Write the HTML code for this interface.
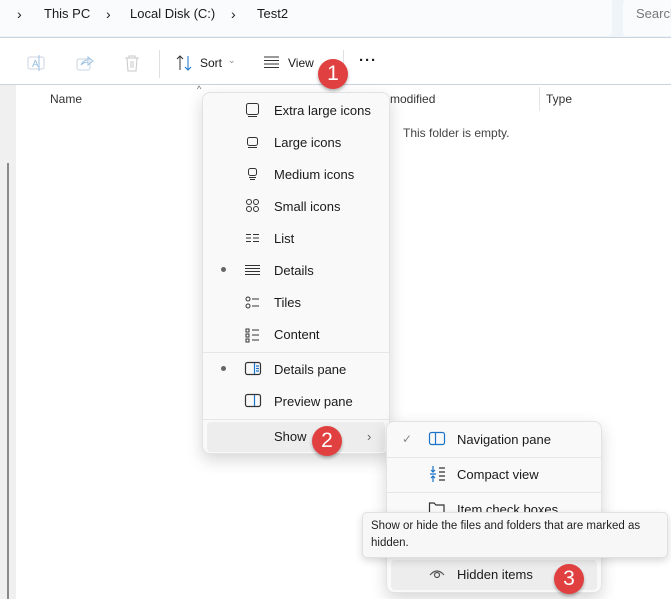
<!DOCTYPE html>
<html><head><meta charset="utf-8"><style>
*{margin:0;padding:0;box-sizing:border-box}
body{width:671px;height:599px;overflow:hidden;background:#fff;font-family:"Segoe UI","Liberation Sans",sans-serif;font-size:13px;color:#1a1a1a;position:relative}
.a{position:absolute;white-space:nowrap}
.menu{position:absolute;background:#f9f9f9;border:1px solid #e3e3e3;border-radius:8px;box-shadow:0 6px 16px rgba(0,0,0,.16)}
.it{position:absolute;left:0;right:0;height:30px}
.it span{position:absolute;top:7px;font-size:13px}
.sep{position:absolute;left:0;right:0;height:1px;background:#e6e6e6}
.badge{position:absolute;width:30px;height:30px;border-radius:50%;background:#e0403f;color:#fff;font-size:21px;text-align:center;line-height:30px;box-shadow:0 2px 3px rgba(0,0,0,.3)}
svg{position:absolute}
</style></head><body>
<div class="a" style="left:0;top:0;width:671px;height:38px;background:#eff4f9;border-bottom:1px solid #c9d3dd"></div>
<div class="a" style="left:0;top:0;width:612px;height:36px;background:#f9fbfd;border-radius:0 0 4px 0"></div>
<div class="a" style="left:623px;top:0;width:60px;height:36px;background:#f9fbfd;border-radius:4px"></div>
<div class="a" style="left:17px;top:6px;font-size:14px">›</div>
<div class="a" style="left:44px;top:6px;font-size:13px">This PC</div>
<div class="a" style="left:106px;top:6px;font-size:14px">›</div>
<div class="a" style="left:130px;top:6px">Local Disk (C:)</div>
<div class="a" style="left:231px;top:6px;font-size:14px">›</div>
<div class="a" style="left:257px;top:6px">Test2</div>
<div class="a" style="left:636px;top:6px;color:#777">Search</div>
<div class="a" style="left:0;top:84px;width:671px;height:1px;background:#c9d3dd"></div>
<svg style="left:27px;top:54px" width="18" height="18"><rect x="1" y="3" width="16" height="12" rx="2" fill="none" stroke="#c8d4e0"/><text x="5" y="13" font-size="10" fill="#9cc0e0" font-family="Liberation Sans">A</text><line x1="12" y1="1" x2="12" y2="17" stroke="#9cc0e0"/></svg>
<svg style="left:76px;top:54px" width="18" height="18"><rect x="1" y="5" width="13" height="11" rx="2" fill="none" stroke="#c8d4e0"/><path d="M5 11 Q7 6 12 6 L12 3 L17 7 L12 11 L12 8 Q8 8 5 11" fill="none" stroke="#9cc0e0"/></svg>
<svg style="left:124px;top:54px" width="16" height="18"><path d="M1 4H15M5 4V2H11V4M3 4L4 17H12L13 4M7 7V14M9 7V14" fill="none" stroke="#c8c8c8"/></svg>
<div class="a" style="left:159px;top:50px;width:1px;height:28px;background:#e0e0e0"></div>
<svg style="left:176px;top:55px" width="18" height="16"><path d="M4 15V1M1 4L4 1L7 4" fill="none" stroke="#333"/><path d="M12 1V15M9 12L12 15L15 12" fill="none" stroke="#1a73c8"/></svg>
<div class="a" style="left:200px;top:56px;font-size:12px">Sort</div>
<div class="a" style="left:228px;top:55px;font-size:9px;color:#888">⌄</div>
<svg style="left:263px;top:56px" width="17" height="12"><path d="M1 1H16M1 4.5H16M1 8H16M1 11.5H16" stroke="#333"/></svg>
<div class="a" style="left:288px;top:56px;font-size:12px">View</div>
<div class="a" style="left:343px;top:50px;width:1px;height:28px;background:#e0e0e0"></div>
<div class="a" style="left:359px;top:52px;font-size:15px;font-weight:bold;letter-spacing:1px">···</div>
<div class="a" style="left:0;top:85px;width:16px;height:514px;background:#f0f0f0"></div>
<div class="a" style="left:7px;top:163px;width:2px;height:436px;background:#8a8a8a"></div>
<div class="a" style="left:50px;top:92px;font-size:12px;color:#333">Name</div>
<div class="a" style="left:197px;top:84px;font-size:9px;color:#666">^</div>
<div class="a" style="left:380px;top:92px;font-size:12px;color:#333">e modified</div>
<div class="a" style="left:539px;top:87px;width:1px;height:24px;background:#e5e5e5"></div>
<div class="a" style="left:546px;top:92px;font-size:12px;color:#333">Type</div>
<div class="a" style="left:403px;top:126px;font-size:12px;color:#444">This folder is empty.</div>

<div class="menu" style="left:202px;top:92px;width:188px;height:362px">
 <div class="it" style="top:3px"><span style="left:71px">Extra large icons</span></div>
 <div class="it" style="top:35px"><span style="left:71px">Large icons</span></div>
 <div class="it" style="top:67px"><span style="left:71px">Medium icons</span></div>
 <div class="it" style="top:99px"><span style="left:71px">Small icons</span></div>
 <div class="it" style="top:131px"><span style="left:71px">List</span></div>
 <div class="it" style="top:163px"><span style="left:71px">Details</span></div>
 <div class="it" style="top:195px"><span style="left:71px">Tiles</span></div>
 <div class="it" style="top:227px"><span style="left:71px">Content</span></div>
 <div class="sep" style="top:259px"></div>
 <div class="it" style="top:262px"><span style="left:71px">Details pane</span></div>
 <div class="it" style="top:294px"><span style="left:71px">Preview pane</span></div>
 <div class="sep" style="top:326px"></div>
 <div class="it" style="top:329px;left:4px;right:4px;background:#ededed;border-radius:4px"><span style="left:67px">Show</span><span style="left:160px;color:#666">›</span></div>
</div>
<svg style="left:244px;top:102px" width="18" height="250" fill="none" stroke="#333" stroke-width="1">
 <rect x="2.5" y="1.5" width="12" height="11" rx="2"/><path d="M4 14.5H13"/>
 <rect x="3.5" y="35.5" width="10" height="8" rx="2"/><path d="M4 45.5H13"/>
 <rect x="4.5" y="66.5" width="8" height="7" rx="2"/><path d="M5 75.5H12M6 77.5H11"/>
 <circle cx="5" cy="100" r="2.5"/><circle cx="12" cy="100" r="2.5"/><circle cx="5" cy="107" r="2.5"/><circle cx="12" cy="107" r="2.5"/>
 <path d="M2 132.5H7M2 136H7M2 139.5H7M9 132.5H15M9 136H15M9 139.5H15"/>
 <path d="M1 163.5H16M1 166.5H16M1 169.5H16M1 172.5H16"/>
 <circle cx="4" cy="197" r="2"/><circle cx="4" cy="204" r="2"/><path d="M8 197H15M8 204H15"/>
 <rect x="2" y="227" width="3" height="3"/><rect x="2" y="232" width="3" height="3"/><rect x="2" y="237" width="3" height="3"/><path d="M8 228H15M8 233H15M8 238H15"/>
</svg>
<svg style="left:244px;top:360px" width="20" height="50" fill="none" stroke-width="1.2">
 <rect x="1.5" y="2.5" width="15" height="12" rx="2" stroke="#333"/><path d="M10.5 3V14" stroke="#1a73c8"/><path d="M12 6H15M12 8.5H15M12 11H15" stroke="#1a73c8"/>
 <rect x="1.5" y="34.5" width="15" height="12" rx="2" stroke="#333"/><path d="M10.5 35V46" stroke="#1a73c8"/>
</svg>
<div class="a" style="left:221px;top:267px;width:5px;height:5px;border-radius:50%;background:#666"></div>
<div class="a" style="left:221px;top:366px;width:5px;height:5px;border-radius:50%;background:#666"></div>

<div class="menu" style="left:386px;top:421px;width:216px;height:172px">
 <div class="it" style="top:3px"><span style="left:70px">Navigation pane</span><span style="left:15px;color:#888;font-size:12px">✓</span></div>
 <div class="sep" style="top:35px"></div>
 <div class="it" style="top:38px"><span style="left:70px">Compact view</span></div>
 <div class="sep" style="top:70px"></div>
 <div class="it" style="top:73px"><span style="left:70px">Item check boxes</span></div>
 <div class="it" style="top:138px;left:4px;right:4px;background:#ededed;border-radius:4px"><span style="left:66px">Hidden items</span></div>
</div>
<svg style="left:428px;top:430px" width="20" height="160" fill="none" stroke-width="1.2">
 <rect x="1.5" y="2.5" width="15" height="12" rx="2" stroke="#1a73c8"/><path d="M7.5 3V14" stroke="#1a73c8"/>
 <path d="M5 36V42M3 40L5 42L7 40M5 52V46M3 48L5 46L7 48M2 44H8" stroke="#1a73c8"/><path d="M11 38H17M11 42H17M11 46H17M11 50H17" stroke="#333"/>
 <path d="M1.5 73V84H16V75H8L6 73Z" stroke="#333"/>
 <path d="M2 145Q9 137 16 145" stroke="#555"/><circle cx="9" cy="145" r="2.5" stroke="#555"/>
</svg>
<div class="a" style="left:362px;top:512px;width:306px;height:46px;background:#f7f7f7;border:1px solid #e0e0e0;border-radius:5px;box-shadow:0 3px 8px rgba(0,0,0,.15)"></div>
<div class="a" style="left:371px;top:518px;font-size:11.5px;line-height:17px;color:#222">Show or hide the files and folders that are marked as<br>hidden.</div>

<div class="badge" style="left:318px;top:59px">1</div>
<div class="badge" style="left:312px;top:426px">2</div>
<div class="badge" style="left:554px;top:564px">3</div>
</body></html>
